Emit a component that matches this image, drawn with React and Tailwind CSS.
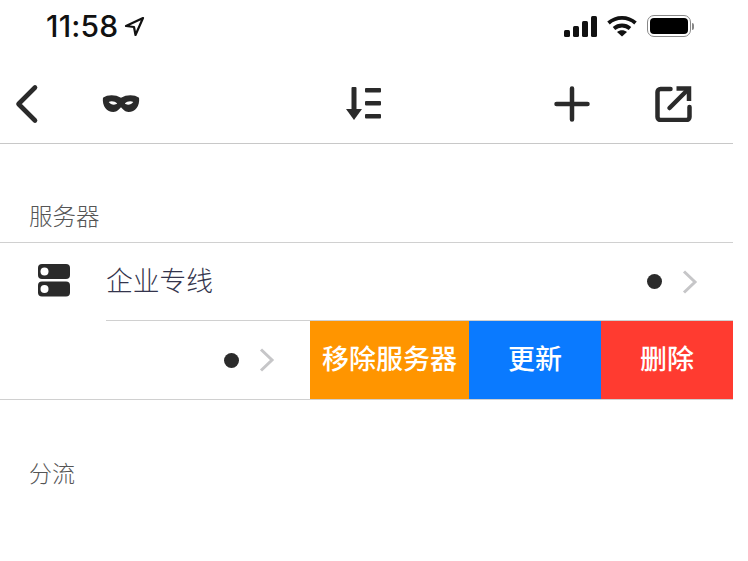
const font = "font-['Inter','Noto_Sans_CJK_SC',sans-serif]";

const StatusBar = () => (
    <div className="h-[52px] flex items-center justify-between pl-[46px] pr-[39px]">
        <div className="flex items-center gap-[6px]">
            <span className="text-[30px] leading-none font-medium text-[#111] tracking-[0.2px]">11:58</span>
            <svg width="21" height="21" viewBox="0 0 21 21" fill="none" stroke="#111" strokeWidth="2.2" strokeLinejoin="round">
                <path d="M19 2 2 10l8 1 1.500 8z" />
            </svg>
        </div>
        <div className="flex items-center gap-[10px]">
            <svg className="-mr-[1px]" width="34" height="21" viewBox="0 0 34 21" fill="#111">
                <rect x="0" y="14" width="6" height="7" rx="1.5" />
                <rect x="9" y="10" width="6" height="11" rx="1.5" />
                <rect x="18" y="5" width="6" height="16" rx="1.5" />
                <rect x="27" y="0" width="6" height="21" rx="1.5" />
            </svg>
            <svg width="30" height="22" viewBox="0 0 30 22" fill="none" stroke="#111" strokeWidth="3.8">
                <path d="M1.500 8c7.800-6.800 19.200-6.800 27 0" />
                <path d="M7 13.500c4.700-4 11.300-4 16 0" />
                <path d="M15 21.500l-5-4.500c3-2.200 7-2.200 10 0z" fill="#111" stroke="none" />
            </svg>
            <div className="flex items-center gap-[1px]">
                <div className="w-[44px] h-[22px] rounded-[7px] border-[1.5px] border-[#888] p-[2px]">
                    <div className="w-full h-full rounded-[4px] bg-black" />
                </div>
                <div className="w-[2px] h-[7px] rounded-r bg-[#888]" />
            </div>
        </div>
    </div>
);

const NavBar = () => (
    <div className="h-[92px] pt-[12px] border-b border-[#c8c8c8]">
        <div className="h-full flex items-center text-[#2a2a2a]">
            <svg className="ml-[14px]" width="26" height="42" viewBox="0 0 26 42" fill="none" stroke="currentColor" strokeWidth="4.6" strokeLinecap="round" strokeLinejoin="round">
                <path d="M21 4.500 4.500 21 21 37.500" />
            </svg>
            <svg className="ml-[62px]" width="38" height="20" viewBox="0 0 40 21" fill="currentColor">
                <path fillRule="evenodd" d="M1 4c5-3.500 13-3.500 19 0 6-3.500 14-3.500 19 0 1 9-4 15-11 15-4 0-6-3-8-5-2 2-4 5-8 5C5 19 0 13 1 4zm6 4.500c2 3 7 3.500 9 1.500-2.500-2.500-6.500-3-9-1.500zm26 0c-2.500-1.500-6.500-1-9 1.500 2 2 7 1.500 9-1.500z" />
            </svg>
            <svg className="ml-[205px]" width="38" height="36" viewBox="0 0 38 36" fill="currentColor">
                <rect x="6.500" y="1" width="5" height="26" rx="1" />
                <path d="M1 23h16l-8 11z" />
                <rect x="20" y="2" width="16" height="4.500" rx="1" />
                <rect x="20" y="15" width="16" height="4.500" rx="1" />
                <rect x="20" y="28" width="16" height="4.500" rx="1" />
            </svg>
            <svg className="ml-[171px]" width="36" height="36" viewBox="0 0 36 36" fill="none" stroke="currentColor" strokeWidth="4.5" strokeLinecap="round">
                <path d="M18 2.500v31M2.500 18h31" />
            </svg>
            <svg className="ml-[65px]" width="37" height="36" viewBox="0 0 36 36" fill="none" stroke="currentColor" strokeWidth="4.5" strokeLinecap="round" strokeLinejoin="round">
                <path d="M15 3H5a3 3 0 0 0-3 3v25a3 3 0 0 0 3 3h26a3 3 0 0 0 3-3V21" />
                <path d="M14 22 32 4" />
                <path d="M21 2.500h12.500V15" strokeLinecap="butt" strokeLinejoin="miter" />
            </svg>
        </div>
    </div>
);

const Status = () => (
    <div className="flex items-center gap-[20px]">
        <div className="w-[15px] h-[15px] rounded-full bg-[#2b2b2b]" />
        <svg width="16" height="26" viewBox="0 0 16 26" fill="none" stroke="#c6c6c8" strokeWidth="3">
            <path d="M2 2.500 13 13 2 23.500" />
        </svg>
    </div>
);

const ServerIcon = () => (
    <svg width="34" height="34" viewBox="0 0 34 34">
        <rect x="1" y="1" width="32" height="15" rx="4" fill="#2a2a2a" />
        <rect x="1" y="18.500" width="32" height="15" rx="4" fill="#2a2a2a" />
        <circle cx="7.500" cy="8.500" r="4" fill="#fff" />
        <circle cx="7.500" cy="26" r="4" fill="#fff" />
    </svg>
);

const App = () => {
    return (
        <div className={`${font} w-[748px] h-[561px] bg-white overflow-hidden`}>
            <div className="w-[733px]">
                <StatusBar />
                <NavBar />

                <div className="h-[98px] pl-[29px] pb-[9px] flex items-end text-[23.5px] leading-[32px] font-light text-[#555]">
                    服务器
                </div>

                <div className="border-y border-[#d0d0d0]">
                    <div className="flex">
                        <div className="w-[106px] shrink-0 pl-[37px] pt-[20px]">
                            <ServerIcon />
                        </div>
                        <div className="flex-1 h-[78px] border-b border-[#d0d0d0] flex items-center justify-between pr-[35px]">
                            <span className="text-[26.75px] font-light text-[#34344c]">企业专线</span>
                            <Status />
                        </div>
                    </div>

                    <div className="flex h-[78px]">
                        <div className="flex-1 flex items-center justify-end pr-[35px]">
                            <Status />
                        </div>
                        <div className="w-[159px] bg-[#ff9500] flex items-center justify-center text-[27px] font-medium text-white">移除服务器</div>
                        <div className="w-[132px] bg-[#0a7aff] flex items-center justify-center text-[27px] font-medium text-white">更新</div>
                        <div className="w-[132px] bg-[#ff3b30] flex items-center justify-center text-[27px] font-medium text-white">删除</div>
                    </div>
                </div>

                <div className="h-[90px] pl-[29px] flex items-end text-[23px] leading-[32px] font-light text-[#555]">
                    分流
                </div>
            </div>
        </div>
    );
};

export default App;
